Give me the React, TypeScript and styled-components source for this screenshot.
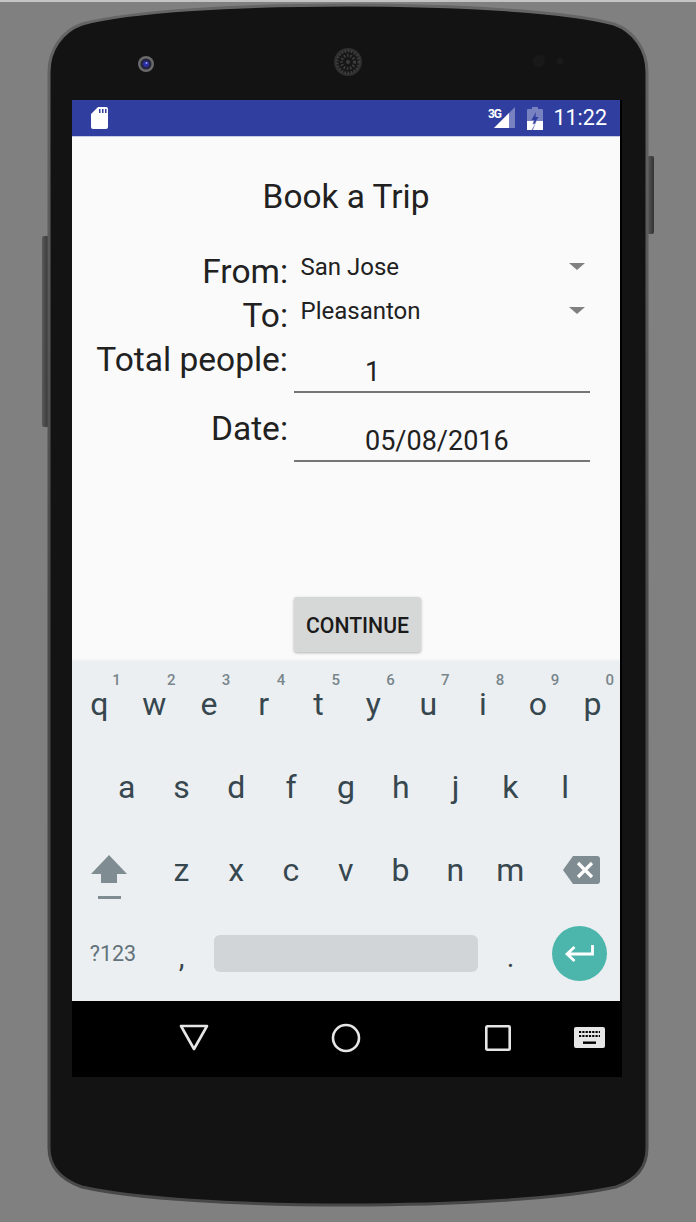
import React from 'react';
import styled, { createGlobalStyle } from 'styled-components';

const GlobalStyle = createGlobalStyle`
  html, body {
    margin: 0;
    padding: 0;
    background: #808080;
  }
  * {
    box-sizing: border-box;
  }
`;

const Stage = styled.div`
  position: relative;
  width: 696px;
  height: 1222px;
  padding: 100px 74px 0 72px;
  overflow: hidden;
  background: #808080;
  border-top: 2px solid #c4c4c4;
  font-family: Roboto, "Liberation Sans", sans-serif;
`;

const Chassis = styled.svg`
  position: absolute;
  top: -2px;
  left: 0;
`;

const Screen = styled.div`
  position: relative;
  margin-top: -2px;
  width: 550px;
  height: 977px;
  display: flex;
  flex-direction: column;
  background: #000;
`;

const StatusBar = styled.div`
  width: 548px;
  height: 36px;
  flex-shrink: 0;
  display: flex;
  align-items: center;
  padding: 0 13px 0 19px;
  background: #303f9f;
`;

const StatusRight = styled.div`
  margin-left: auto;
  display: flex;
  align-items: center;
`;

const Clock = styled.span`
  margin-left: 10px;
  color: #fff;
  font-size: 21.5px;
  line-height: 36px;
`;

const Content = styled.main`
  width: 548px;
  height: 523px;
  flex-shrink: 0;
  display: flex;
  flex-direction: column;
  background: #fafafa;
  box-shadow: inset 0 1px 0 #c5c9e4;
`;

const Title = styled.h1`
  margin: 40px 0 0;
  height: 42px;
  text-align: center;
  font-size: 33.4px;
  line-height: 42px;
  font-weight: 400;
  color: #212121;
`;

const Form = styled.div`
  margin-top: 31px;
  display: grid;
  grid-template-columns: 216px 296px;
  column-gap: 6px;
`;

const Label = styled.div<{ $offset?: number }>`
  padding-top: ${props => (props.$offset ?? 0) + 1}px;
  height: 44px;
  text-align: right;
  font-size: 33.5px;
  line-height: 44px;
  color: #212121;
`;

const Spinner = styled.div`
  height: 44px;
  display: flex;
  align-items: flex-start;
  padding: 2px 5px 0 6.5px;
  font-size: 24px;
  line-height: 32px;
  color: #212121;
`;

const SpinnerArrow = styled.span`
  margin: 12px 0 0 auto;
  width: 0;
  height: 0;
  border-style: solid;
  border-width: 7px 8px 0 8px;
  border-color: #808080 transparent transparent transparent;
`;

const InputField = styled.div<{ $height: number }>`
  height: ${props => props.$height}px;
  padding-left: 71px;
  border-bottom: 2px solid #757575;
  display: flex;
  align-items: flex-end;
  font-size: 27px;
  line-height: 37px;
  color: #212121;
`;

const ButtonRow = styled.div`
  margin-top: auto;
  padding: 0 0 7px 222px;
`;

const ContinueButton = styled.button`
  display: block;
  width: 127px;
  height: 55px;
  padding: 1px 0 0;
  border: none;
  border-radius: 3px;
  background: #d6d7d7;
  box-shadow: 0 1px 3px rgba(0, 0, 0, 0.3);
  font-family: inherit;
  font-size: 21.2px;
  font-weight: 500;
  color: #1a1a1a;
`;

const Keyboard = styled.section`
  width: 548px;
  height: 342px;
  flex-shrink: 0;
  padding-top: 1px;
  background: #eceff1;
  border-top: 2px solid #f3f4f4;
`;

const KeyRow = styled.div<{ $columns: string }>`
  display: grid;
  height: 83.3px;
  grid-template-columns: ${props => props.$columns};
`;

const Key = styled.div`
  position: relative;
  display: flex;
  align-items: center;
  justify-content: center;
  font-size: 32px;
  line-height: 38px;
  color: #37474f;
`;

const Hint = styled.span`
  position: absolute;
  top: 8px;
  right: 6px;
  font-size: 15px;
  line-height: 20px;
  font-weight: 500;
  color: #78868c;
`;

const ShiftKey = styled(Key)`
  padding: 14px 8px 0 0;
`;

const BackspaceKey = styled(Key)`
  padding-left: 5px;
`;

const SymbolsKey = styled(Key)`
  font-size: 21.5px;
  color: #62727a;
`;

const PunctuationKey = styled(Key)`
  font-size: 29px;
  padding-top: 6px;
`;

const SpaceBar = styled.div`
  align-self: center;
  margin: 0 5px;
  height: 37px;
  border-radius: 6px;
  background: #d1d5d8;
`;

const EnterKey = styled.div`
  align-self: center;
  justify-self: center;
  width: 55px;
  height: 55px;
  border-radius: 50%;
  display: flex;
  align-items: center;
  justify-content: center;
  background: #4db6ac;
`;

const NavBar = styled.nav`
  flex: 1;
  display: grid;
  grid-template-columns: 152px 152px 152px 31px;
  justify-items: center;
  align-items: center;
  padding: 0 0 3px 46px;
  background: #000;
`;

const BatterySvg = styled.svg`
  margin-left: 12px;
`;

const DeviceFrame = () => (
  <Chassis width="696" height="1222" viewBox="0 0 696 1222">
    <defs>
      <linearGradient id="edge" x1="0" y1="0" x2="0" y2="1">
        <stop offset="0" stopColor="#666" />
        <stop offset="0.5" stopColor="#4a4a4a" />
        <stop offset="1" stopColor="#484848" />
      </linearGradient>
      <linearGradient id="rocker" x1="0" y1="0" x2="1" y2="0">
        <stop offset="0" stopColor="#5a5a5a" />
        <stop offset="1" stopColor="#333" />
      </linearGradient>
    </defs>
    <rect x="42" y="236" width="7" height="191" rx="2" fill="url(#rocker)" />
    <rect x="647" y="156" width="7" height="78" rx="2" fill="url(#rocker)" />
    <path
      d="M49 110 L49 72 C49 50 62 31 82 24 C130 11 240 5 347 5 C455 5 565 11 614 24 C634 31 647 50 647 72 L647 1148 C647 1168 636 1180 616 1187 C560 1199 455 1205 347 1205 C240 1205 135 1199 82 1187 C62 1180 49 1168 49 1148 Z"
      fill="#131313"
      stroke="url(#edge)"
      strokeWidth="3"
    />
    <circle cx="146" cy="64" r="8" fill="#6a6a6a" />
    <circle cx="146" cy="64" r="5.5" fill="#24243c" />
    <circle cx="146" cy="64" r="3" fill="#2b2fa8" />
    <circle cx="146.5" cy="63" r="1" fill="#9aa0e0" />
    <circle cx="348" cy="62" r="14" fill="#2e2e2e" />
    <circle cx="348" cy="62" r="11" fill="#171717" stroke="#3c3c3c" strokeWidth="3" strokeDasharray="1.6 1.6" />
    <circle cx="348" cy="62" r="6.5" fill="none" stroke="#3c3c3c" strokeWidth="3" strokeDasharray="1.6 1.6" />
    <circle cx="348" cy="62" r="2" fill="#3c3c3c" />
    <circle cx="539" cy="61" r="6" fill="#191919" />
    <circle cx="560" cy="61" r="3.5" fill="#1a1a1a" />
  </Chassis>
);

const SdCardIcon = () => (
  <svg width="17" height="22" viewBox="0 0 17 22">
    <path
      d="M7 0 H15 A2 2 0 0 1 17 2 V20 A2 2 0 0 1 15 22 H2 A2 2 0 0 1 0 20 V7 Z M8 2 V6 H9.5 V2 Z M11 2 V6 H12.5 V2 Z M14 2 V6 H15.5 V2 Z"
      fill="#fff"
      fillRule="evenodd"
    />
  </svg>
);

const SignalIcon = () => (
  <svg width="28" height="22" viewBox="0 0 28 22">
    <polygon points="28,0 28,21 7,21" fill="#fff" fillOpacity="0.35" />
    <polygon points="22,6 22,21 7,21" fill="#fff" />
    <text x="1" y="10.5" fill="#fff" fontFamily="Roboto, sans-serif" fontSize="12" fontWeight="700" textLength="14">
      3G
    </text>
  </svg>
);

const BatteryIcon = () => (
  <BatterySvg width="16" height="23" viewBox="0 0 16 23">
    <path d="M5 0 H11 V2 H15 A1 1 0 0 1 16 3 V23 H0 V3 A1 1 0 0 1 1 2 H5 Z" fill="#fff" fillOpacity="0.35" />
    <path d="M0 14 H6.5 L5.5 17 H8 L4.5 23 H0 Z M9.5 14 H16 V23 H6 Z" fill="#fff" />
    <path d="M9 5 L4.5 13 H7.5 L6.5 18 L11.5 10 H8.5 Z" fill="#303f9f" />
  </BatterySvg>
);

const ShiftIcon = () => (
  <svg width="36" height="44" viewBox="0 0 36 44">
    <path d="M18 0 L36 19 H26 V28 H10 V19 H0 Z" fill="#7f8c91" />
    <rect x="7" y="41" width="23" height="3" fill="#7f8c91" />
  </svg>
);

const BackspaceIcon = () => (
  <svg width="37" height="28" viewBox="0 0 37 28">
    <path d="M10 0 H34 A3 3 0 0 1 37 3 V25 A3 3 0 0 1 34 28 H10 L0 14 Z" fill="#7f8c91" />
    <path d="M15 7 L29 21 M29 7 L15 21" stroke="#fff" strokeWidth="3.2" />
  </svg>
);

const EnterIcon = () => (
  <svg width="30" height="20" viewBox="0 0 30 20">
    <path d="M28.5 1 V10 H4 M10.5 3 L3 10 L10.5 17" fill="none" stroke="#fff" strokeWidth="2.8" />
  </svg>
);

const BackIcon = () => (
  <svg width="30" height="27" viewBox="0 0 30 27">
    <path d="M2 2 H28 L15 25 Z" fill="none" stroke="#e6e6e6" strokeWidth="2.6" strokeLinejoin="round" />
  </svg>
);

const HomeIcon = () => (
  <svg width="30" height="30" viewBox="0 0 30 30">
    <circle cx="15" cy="15" r="13" fill="none" stroke="#e6e6e6" strokeWidth="2.6" />
  </svg>
);

const RecentsIcon = () => (
  <svg width="26" height="26" viewBox="0 0 26 26">
    <rect x="1.3" y="1.3" width="23.4" height="23.4" rx="1" fill="none" stroke="#e6e6e6" strokeWidth="2.6" />
  </svg>
);

const KeyboardIcon = () => (
  <svg width="31" height="21" viewBox="0 0 31 21">
    <rect width="31" height="21" rx="2" fill="#e6e6e6" />
    <path d="M5 5 H26 M5 9 H26" stroke="#000" strokeWidth="2.2" strokeDasharray="2.2 1.1" />
    <rect x="9" y="14.5" width="13" height="2.4" fill="#000" />
  </svg>
);

const topRow: [string, string][] = [
  ['q', '1'], ['w', '2'], ['e', '3'], ['r', '4'], ['t', '5'],
  ['y', '6'], ['u', '7'], ['i', '8'], ['o', '9'], ['p', '0'],
];

export default function App() {
  return (
    <Stage>
      <GlobalStyle />
      <DeviceFrame />
      <Screen>
        <StatusBar>
          <SdCardIcon />
          <StatusRight>
            <SignalIcon />
            <BatteryIcon />
            <Clock>11:22</Clock>
          </StatusRight>
        </StatusBar>
        <Content>
          <Title>Book a Trip</Title>
          <Form>
            <Label>From:</Label>
            <Spinner>
              San Jose
              <SpinnerArrow />
            </Spinner>
            <Label>To:</Label>
            <Spinner>
              Pleasanton
              <SpinnerArrow />
            </Spinner>
            <Label>Total people:</Label>
            <InputField $height={56}>1</InputField>
            <Label $offset={13}>Date:</Label>
            <InputField $height={69}>05/08/2016</InputField>
          </Form>
          <ButtonRow>
            <ContinueButton>CONTINUE</ContinueButton>
          </ButtonRow>
        </Content>
        <Keyboard>
          <KeyRow $columns="repeat(10, 1fr)">
            {topRow.map(([letter, digit]) => (
              <Key key={letter}>
                {letter}
                <Hint>{digit}</Hint>
              </Key>
            ))}
          </KeyRow>
          <KeyRow $columns="27.4px repeat(9, 54.8px)">
            <span />
            {'asdfghjkl'.split('').map(letter => (
              <Key key={letter}>{letter}</Key>
            ))}
          </KeyRow>
          <KeyRow $columns="82px repeat(7, 54.8px) 82px">
            <ShiftKey>
              <ShiftIcon />
            </ShiftKey>
            {'zxcvbnm'.split('').map(letter => (
              <Key key={letter}>{letter}</Key>
            ))}
            <BackspaceKey>
              <BackspaceIcon />
            </BackspaceKey>
          </KeyRow>
          <KeyRow $columns="82px 55px 274px 55px 82px">
            <SymbolsKey>?123</SymbolsKey>
            <PunctuationKey>,</PunctuationKey>
            <SpaceBar />
            <PunctuationKey>.</PunctuationKey>
            <EnterKey>
              <EnterIcon />
            </EnterKey>
          </KeyRow>
        </Keyboard>
        <NavBar>
          <BackIcon />
          <HomeIcon />
          <RecentsIcon />
          <KeyboardIcon />
        </NavBar>
      </Screen>
    </Stage>
  );
}
